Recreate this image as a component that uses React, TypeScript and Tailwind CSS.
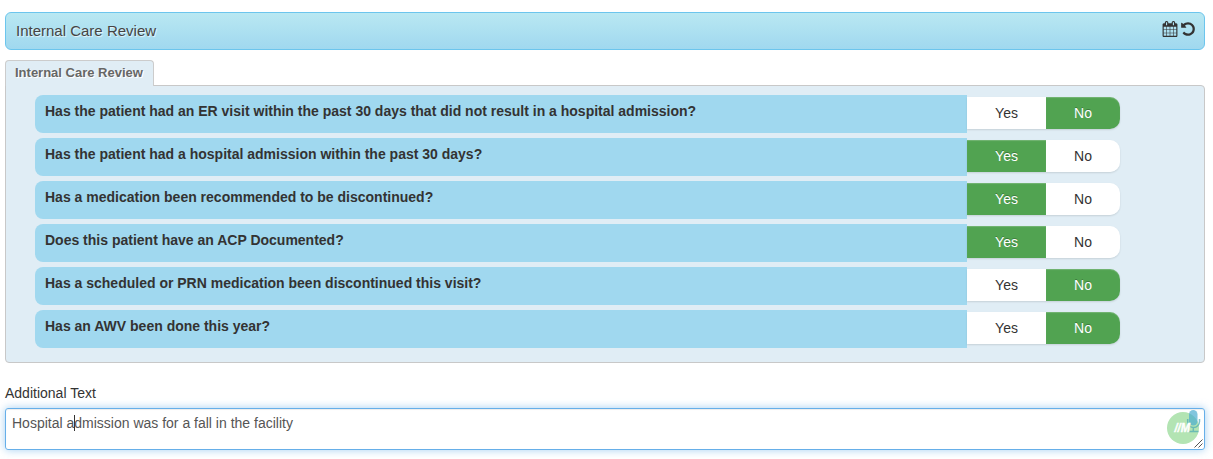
import React, { useState } from 'react';

type Answer = 'Yes' | 'No';

interface Question {
  text: string;
  answer: Answer;
}

const questions: Question[] = [
  { text: 'Has the patient had an ER visit within the past 30 days that did not result in a hospital admission?', answer: 'No' },
  { text: 'Has the patient had a hospital admission within the past 30 days?', answer: 'Yes' },
  { text: 'Has a medication been recommended to be discontinued?', answer: 'Yes' },
  { text: 'Does this patient have an ACP Documented?', answer: 'Yes' },
  { text: 'Has a scheduled or PRN medication been discontinued this visit?', answer: 'No' },
  { text: 'Has an AWV been done this year?', answer: 'No' },
];

const CalendarIcon: React.FC = () => (
  <svg width="16" height="16" viewBox="0 0 1792 1792" fill="currentColor">
    <path d="M192 1664h288v-288h-288v288zm352 0h320v-288h-320v288zm-352-352h288v-320h-288v320zm352 0h320v-320h-320v320zm-352-384h288v-288h-288v288zm736 736h320v-288h-320v288zm-384-736h320v-288h-320v288zm768 736h288v-288h-288v288zm-384-352h320v-320h-320v320zm-352-864v-288q0-13-9.500-22.500t-22.500-9.500h-64q-13 0-22.500 9.500t-9.500 22.500v288q0 13 9.500 22.500t22.500 9.500h64q13 0 22.500-9.500t9.500-22.500zm736 864h288v-320h-288v320zm-384-384h320v-288h-320v288zm384 0h288v-288h-288v288zm32-480v-288q0-13-9.500-22.500t-22.500-9.500h-64q-13 0-22.500 9.500t-9.500 22.500v288q0 13 9.500 22.500t22.500 9.500h64q13 0 22.500-9.500t9.500-22.500zm384-64v1280q0 52-38 90t-90 38h-1408q-52 0-90-38t-38-90v-1280q0-52 38-90t90-38h128v-96q0-66 47-113t113-47h64q66 0 113 47t47 113v96h384v-96q0-66 47-113t113-47h64q66 0 113 47t47 113v96h128q52 0 90 38t38 90z" />
  </svg>
);

const UndoIcon: React.FC = () => (
  <svg width="16" height="16" viewBox="0 0 1792 1792" fill="currentColor">
    <path d="M1664 896q0 156-61 298t-164 245-245 164-298 61q-172 0-327-72.500t-264-204.500q-7-10-6.500-22.500t8.500-20.500l137-138q10-9 25-9 16 2 23 12 73 95 179 147t225 52q104 0 198.500-40.500t163.500-109.500 109.500-163.500 40.500-198.500-40.500-198.500-109.500-163.500-163.500-109.500-198.500-40.500q-98 0-188 35.500t-160 101.500l137 138q31 30 14 69-17 40-59 40h-448q-26 0-45-19t-19-45v-448q0-42 40-59 39-17 69 14l130 129q107-101 244.500-156.500t284.500-55.500q156 0 298 61t245 164 164 245 61 298z" />
  </svg>
);

const DictationBadge: React.FC = () => (
  <svg width="36" height="36" viewBox="0 0 36 36" fill="none">
    <circle cx="16" cy="19" r="16" fill="#b3e4b3" />
    <rect x="22" y="1" width="8.500" height="15.500" rx="4.250" fill="#4bacd0" fillOpacity="0.700" />
    <path d="M20.700 10v2.500a5.900 5.900 0 0 0 11.800 0V10M26.300 18.500v4M21.500 22.500h10" stroke="#4ba9b5" strokeOpacity="0.700" strokeWidth="1.500" />
    <text x="7.500" y="22.700" textLength="15.500" lengthAdjust="spacingAndGlyphs" fill="#fff" stroke="#fff" strokeWidth="0.400" className="font-['Liberation_Sans',sans-serif] text-[12.500px] font-bold italic">
      //M
    </text>
  </svg>
);

const QuestionRow: React.FC<{ question: Question }> = ({ question }) => {
  const [answer, setAnswer] = useState<Answer>(question.answer);
  const on = 'bg-[#51a351] text-white [text-shadow:0_-1px_0_rgba(0,0,0,0.25)] shadow-[inset_0_1px_1px_rgba(255,255,255,0.2)]';
  const off = 'bg-white text-[#333]';

  return (
    <div className="flex h-[38px]">
      <div className="w-[932px] rounded-l-lg bg-[#a0d8ef] pl-2.5 pt-1.5 font-bold leading-5 text-[#333]">
        {question.text}
      </div>
      <div className="mt-0.5 flex h-8 rounded-r-[10px] shadow-[0_1px_2px_rgba(0,0,0,0.12)]">
        <button onClick={() => setAnswer('Yes')} className={`w-[79px] ${answer === 'Yes' ? on : off}`}>
          Yes
        </button>
        <button onClick={() => setAnswer('No')} className={`w-[74px] rounded-r-[10px] ${answer === 'No' ? on : off}`}>
          No
        </button>
      </div>
    </div>
  );
};

const App: React.FC = () => {
  return (
    <div className="h-[459px] w-[1213px] overflow-hidden bg-white pl-[5px] pr-2 pt-3 font-['Liberation_Sans',Arial,sans-serif] text-sm leading-5 text-[#333]">
      <header className="flex h-[38px] items-center justify-between rounded-md border border-[#6cc5ed] bg-linear-to-b from-[#b9e8f2] to-[#a0d8ef] pl-2.5 pr-2">
        <h1 className="text-[15px] text-[#444] [text-shadow:1px_1px_1px_rgba(255,255,255,0.8)]">Internal Care Review</h1>
        <div className="mb-1 flex gap-0.5 text-[#333]">
          <CalendarIcon />
          <UndoIcon />
        </div>
      </header>

      <div className="mt-2.5 flex">
        <div className="relative z-10 -mb-px h-[26px] w-[149px] rounded-t-sm border border-b-0 border-[#ccc] bg-[#e0edf5] pl-[9px] pt-[2px] text-[13px] font-bold text-[#666] [text-shadow:1px_1px_0_#fff]">
          Internal Care Review
        </div>
      </div>
      <section className="flex h-[278px] flex-col gap-[5px] rounded-sm rounded-tl-none border border-[#c8c8c8] bg-[#e0edf5] pl-[29px] pt-[9px]">
        {questions.map((q) => (
          <QuestionRow key={q.text} question={q} />
        ))}
      </section>

      <label className="mt-5 block">Additional Text</label>
      <div className="relative mt-[5px] h-[42px] rounded-[3px] border border-[#66afe9] px-1.5 pt-1 text-[#555] shadow-[inset_0_1px_1px_rgba(0,0,0,0.075),0_0_8px_rgba(102,175,233,0.6)]">
        Hospital a
        <span className="-mr-px inline-block h-4 w-px bg-[#333] align-[-3px]" />
        dmission was for a fall in the facility
        <div className="absolute right-[1px] top-0">
          <DictationBadge />
        </div>
        <svg className="absolute bottom-px right-px" width="9" height="9" viewBox="0 0 9 9" stroke="#555">
          <path d="M0.500 8.500l8-8M4.500 8.500l4-4" />
        </svg>
      </div>
    </div>
  );
};

export default App;
